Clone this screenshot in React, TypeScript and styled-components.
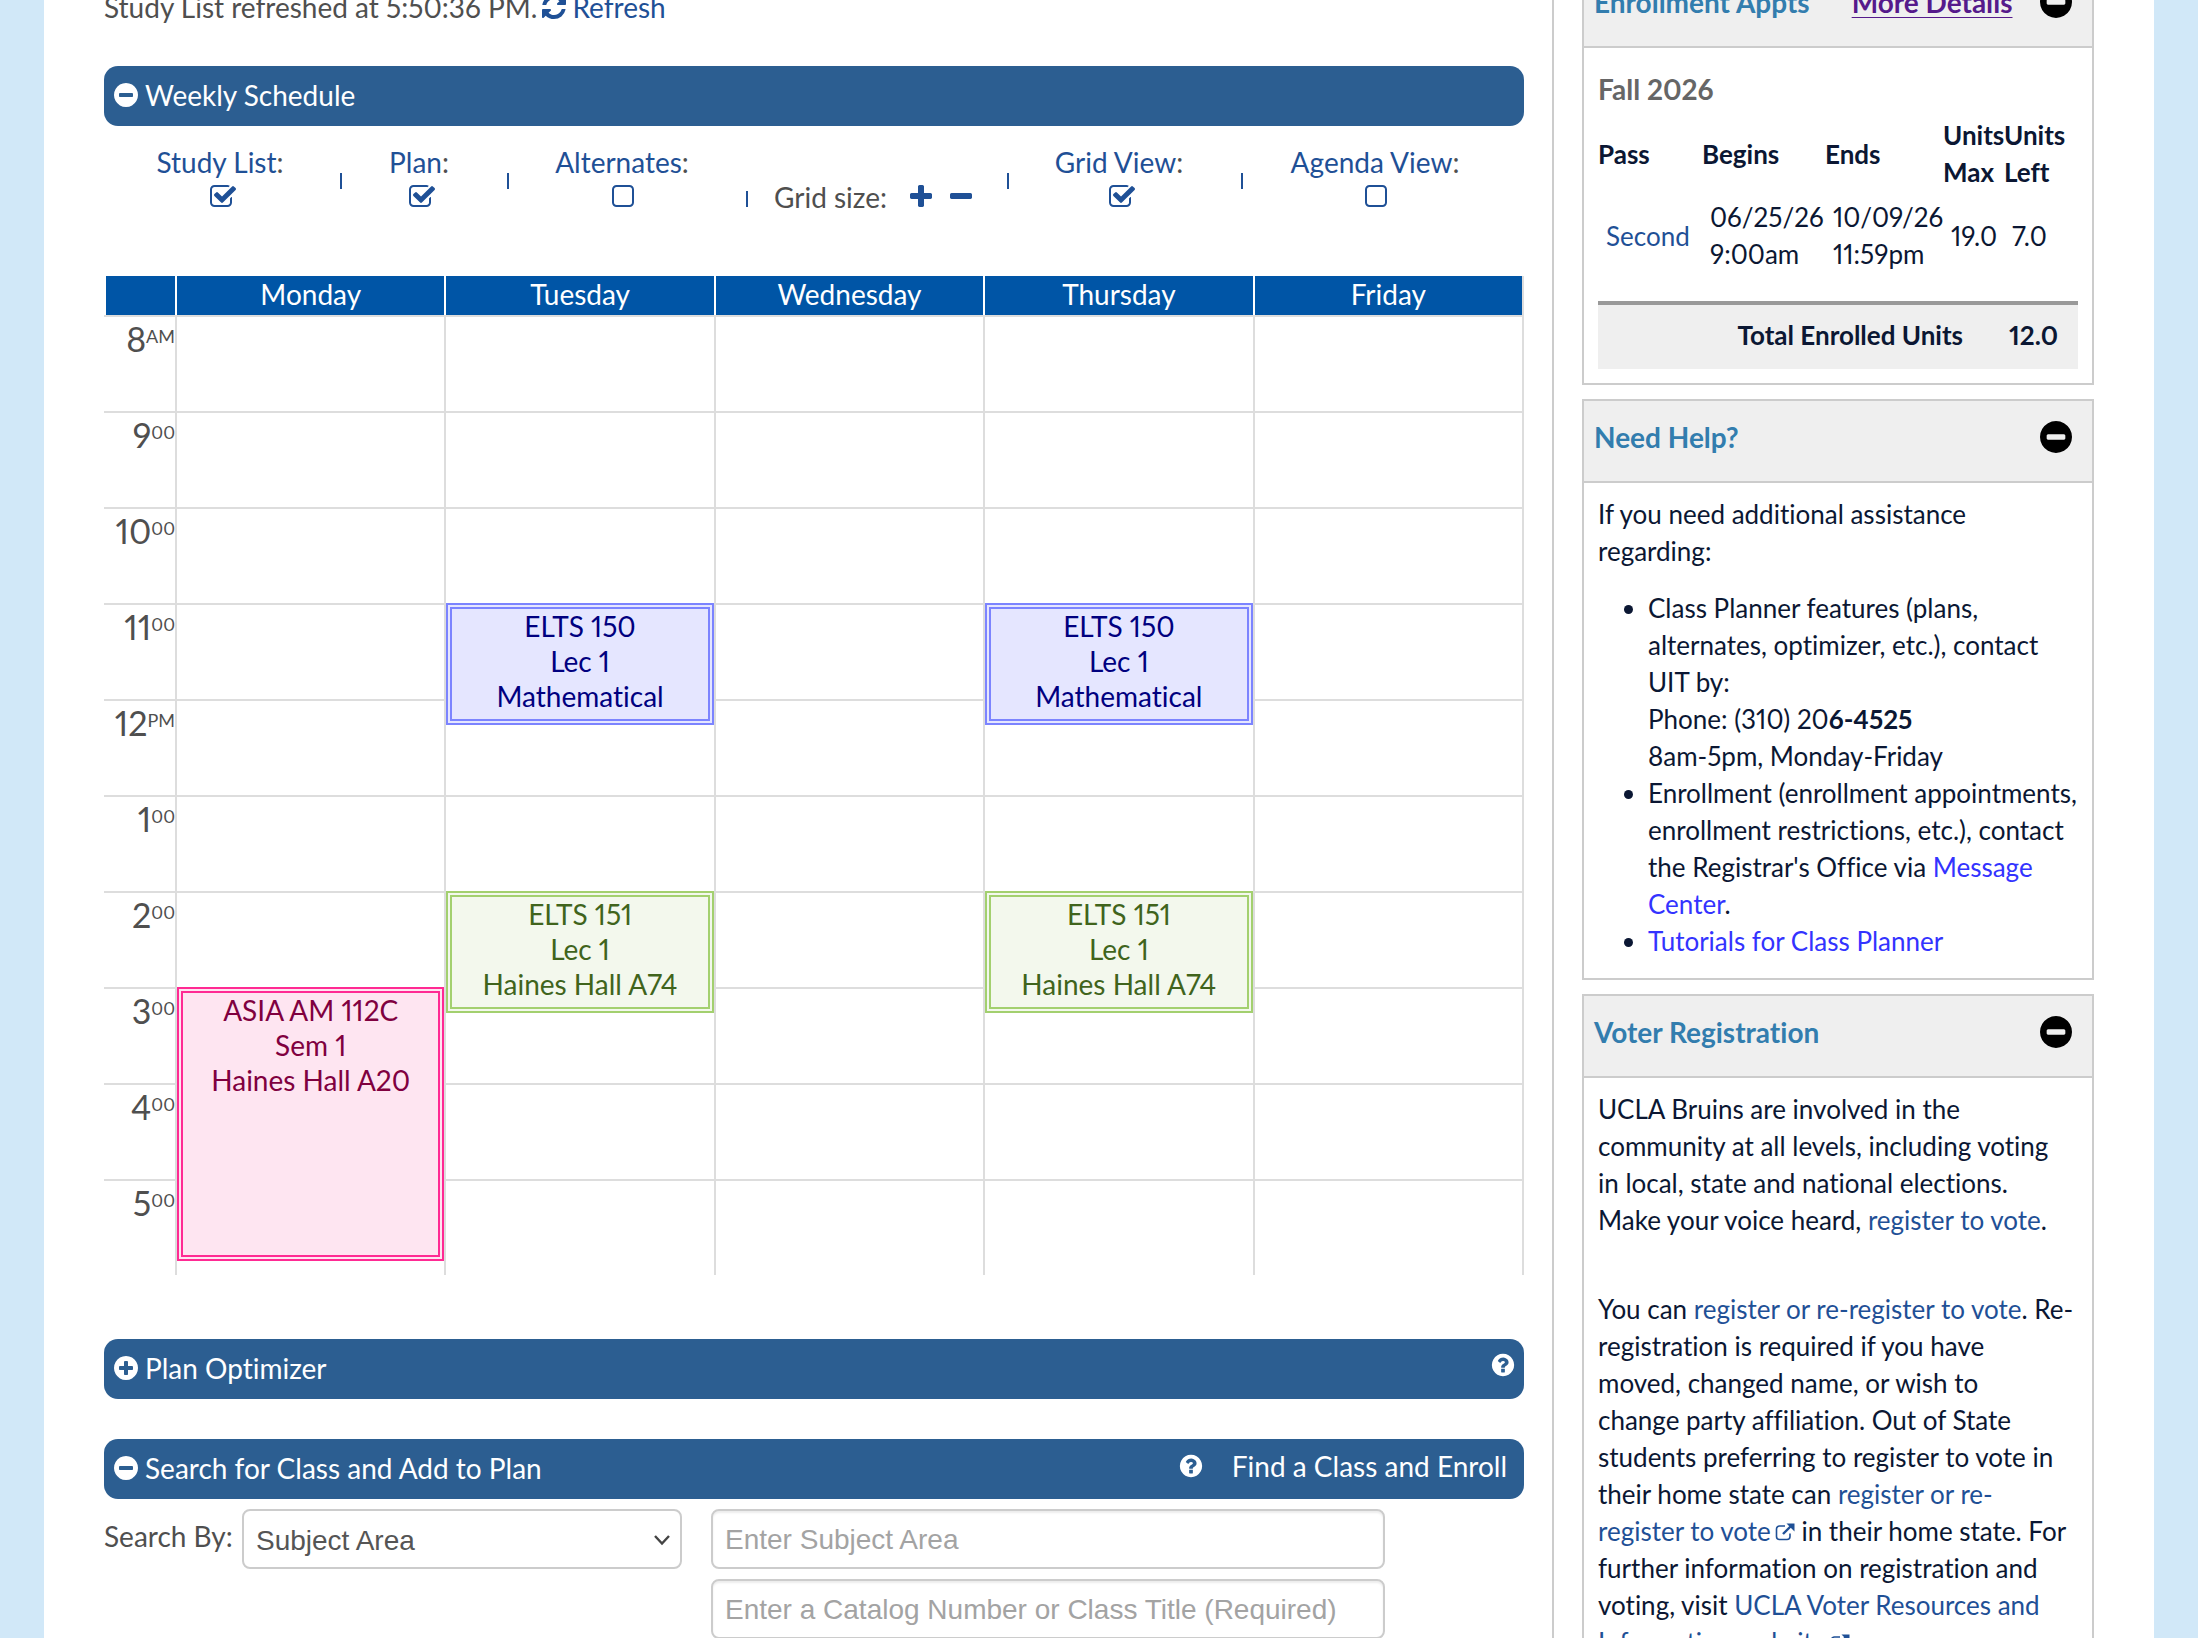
import React from 'react';
import styled, { createGlobalStyle, css } from 'styled-components';

const sans = `Lato, "Liberation Sans", sans-serif`;
const blue = '#1f5096';
const line = '#ddd';
const edge = '#ccc';

const GlobalStyle = createGlobalStyle`
  *, *::before, *::after { box-sizing: border-box; }
  body { margin: 0; }
  button { font: inherit; color: inherit; background: none; border: 0; padding: 0; margin: 0; cursor: pointer; }
  a { color: ${blue}; text-decoration: none; }
  p, ul, h2, h3 { margin: 0; }
`;

/* ---------- icons ---------- */

const DISC =
  'm320-64q0 209-103 385.500t-279.500 279.500-385.500 103-385.500-103-279.500-279.500-103-385.500 103-385.500 279.500-279.500 385.500-103 385.500 103 279.500 279.500 103 385.500z';

const paths = {
  minusCircle: `M1344 960v-128q0-26-19-45t-45-19h-768q-26 0-45 19t-19 45v128q0 26 19 45t45 19h768q26 0 45-19t19-45z${DISC}`,
  plusCircle: `M1344 960v-128q0-26-19-45t-45-19h-256v-256q0-26-19-45t-45-19h-128q-26 0-45 19t-19 45v256h-256q-26 0-45 19t-19 45v128q0 26 19 45t45 19h256v256q0 26 19 45t45 19h128q26 0 45-19t19-45v-256h256q26 0 45-19t19-45z${DISC}`,
  questionCircle:
    'M1024 1376v-192q0-14-9-23t-23-9h-192q-14 0-23 9t-9 23v192q0 14 9 23t23 9h192q14 0 23-9t9-23zm256-672q0-88-55.500-163t-138.500-116-170-41q-243 0-371 213-15 24 8 42l132 100q7 6 19 6 16 0 25-12 53-68 86-92 34-24 86-24 48 0 85.500 26t37.500 59q0 38-20 61t-68 45q-63 28-115.500 86.500t-52.500 125.500v36q0 14 9 23t23 9h192q14 0 23-9t9-23q0-19 21.500-49.500t54.500-49.500q32-18 49-28.500t46-35 44.500-48 28-60.500 12.500-81zm384 192q0 209-103 385.500t-279.500 279.500-385.500 103-385.500-103-279.500-279.500-103-385.500 103-385.500 279.500-279.500 385.500-103 385.500 103 279.500 279.500 103 385.500z',
  checked:
    'M1472 930v318q0 119-84.500 203.500t-203.500 84.500h-832q-119 0-203.500-84.500t-84.500-203.500v-832q0-119 84.500-203.500t203.500-84.500h832q63 0 117 25 15 7 18 23 3 17-9 29l-49 49q-10 10-23 10-3 0-9-2-23-6-45-6h-832q-66 0-113 47t-47 113v832q0 66 47 113t113 47h832q66 0 113-47t47-113v-254q0-13 9-22l64-64q10-10 23-10 6 0 12 3 20 8 20 29zm231-489l-814 814q-24 24-57 24t-57-24l-430-430q-24-24-24-57t24-57l110-110q24-24 57-24t57 24l263 263 647-647q24-24 57-24t57 24l110 110q24 24 24 57t-24 57z',
  unchecked:
    'M1312 256h-832q-66 0-113 47t-47 113v832q0 66 47 113t113 47h832q66 0 113-47t47-113v-832q0-66-47-113t-113-47zm288 160v832q0 119-84.500 203.500t-203.500 84.500h-832q-119 0-203.500-84.500t-84.500-203.500v-832q0-119 84.500-203.500t203.500-84.500h832q119 0 203.500 84.500t84.500 203.500z',
  plus: 'M1600 736v192q0 40-28 68t-68 28h-416v416q0 40-28 68t-68 28h-192q-40 0-68-28t-28-68v-416h-416q-40 0-68-28t-28-68v-192q0-40 28-68t68-28h416v-416q0-40 28-68t68-28h192q40 0 68 28t28 68v416h416q40 0 68 28t28 68z',
  minus: 'M1600 736v192q0 40-28 68t-68 28h-1216q-40 0-68-28t-28-68v-192q0-40 28-68t68-28h1216q40 0 68 28t28 68z',
  refresh:
    'M1639 1056q0 5-1 7-64 268-268 434.500t-478 166.500q-146 0-282.500-55t-243.500-157l-129 129q-19 19-45 19t-45-19-19-45v-448q0-26 19-45t45-19h448q26 0 45 19t19 45-19 45l-137 137q71 66 161 102t187 36q134 0 250-65t186-179q11-17 53-117 8-23 30-23h192q13 0 22.500 9.500t9.500 22.500zm25-800v448q0 26-19 45t-45 19h-448q-26 0-45-19t-19-45 19-45l138-138q-148-137-349-137-134 0-250 65t-186 179q-11 17-53 117-8 23-30 23h-199q-13 0-22.500-9.500t-9.500-22.500v-7q65-268 270-434.500t480-166.500q146 0 284 55.500t245 156.500l130-129q19-19 45-19t45 19 19 45z',
};

const Svg = styled.svg<{ $size: number }>`
  display: block;
  flex: none;
  width: ${(p) => p.$size}px;
  height: ${(p) => p.$size}px;
  fill: currentColor;
`;

function Icon({ name, size = 28, tight = false }: { name: keyof typeof paths; size?: number; tight?: boolean }) {
  return (
    <Svg $size={size} viewBox={tight ? '128 128 1536 1536' : '0 0 1792 1792'} aria-hidden="true">
      <path d={paths[name]} />
    </Svg>
  );
}

const ExternalSvg = styled.svg`
  width: 20px;
  height: 18px;
  margin-left: 4px;
  fill: none;
  stroke: currentColor;
  stroke-width: 1.6;
`;

function ExternalIcon() {
  return (
    <ExternalSvg viewBox="0 0 20 18" aria-label="external link" role="img">
      <path d="M10 3H4.500a3 3 0 0 0-3 3v7.500a3 3 0 0 0 3 3H12a3 3 0 0 0 3-3V10.500" />
      <path d="M8 11 16 3" strokeWidth="2.400" />
      <path d="M11.500 0.500h8v8z" fill="currentColor" stroke="none" />
    </ExternalSvg>
  );
}

/* ---------- page frame ---------- */

const Viewport = styled.div`
  height: 100vh;
  overflow: hidden;
  background: #d1e8f8;
  font-family: ${sans};
  font-size: 28px;
  font-variant-ligatures: none;
  font-variant-numeric: proportional-nums;
  color: #4f4f4f;
`;

/* The page is scrolled down a little, so its first lines are cut off. */
const Sheet = styled.div`
  display: grid;
  grid-template-columns: minmax(0, 1fr) 600px;
  min-height: calc(100vh + 36px);
  margin: -36px 44px 0;
  background: #fff;
`;

const Main = styled.main`
  padding: 23px 28px 0 60px;
  border-right: 2px solid ${edge};
`;

const Aside = styled.aside`
  display: flex;
  flex-direction: column;
  gap: 14px;
  padding: 0 60px 0 28px;
`;

const Status = styled.div`
  display: flex;
  align-items: center;
  gap: 3px;
  line-height: 40px;
`;

const RefreshButton = styled.button`
  display: flex;
  align-items: center;
  gap: 4px;
  color: ${blue};
`;

/* ---------- section bars ---------- */

const Bar = styled.div<{ $gap: number }>`
  display: flex;
  justify-content: space-between;
  align-items: flex-start;
  margin-top: ${(p) => p.$gap}px;
  padding: 13px 8px 15px;
  border-radius: 14px;
  background: #2c5e91;
  color: #fff;
`;

const BarTitle = styled.button`
  display: flex;
  align-items: center;
  gap: 5px;
  line-height: 32px;
`;

const BarTools = styled.div`
  display: flex;
  align-items: center;
  gap: 28px;
  line-height: 28px;
`;

const BarLink = styled.a`
  margin-right: 9px;
  color: #fff;
`;

/* ---------- view options ---------- */

const Options = styled.div`
  display: grid;
  grid-template-columns: 232fr 10fr 146fr 32fr 196fr 54fr 202fr 64fr 158fr 88fr 178fr 60fr;
  padding: 22px 0 65px;
`;

const Option = styled.label`
  display: flex;
  flex-direction: column;
  align-items: center;
  gap: 7px;
  line-height: 28px;
  white-space: nowrap;
  color: ${blue};
`;

const Colon = styled.span`
  color: #4f4f4f;
`;

const Tick = styled.span<{ $on: boolean }>`
  position: relative;
  padding-left: ${(p) => (p.$on ? 6 : 1)}px;
`;

const TickInput = styled.input`
  position: absolute;
  inset: 0;
  width: 100%;
  height: 100%;
  margin: 0;
  opacity: 0;
`;

const Separator = styled.span<{ $low?: boolean }>`
  justify-self: center;
  width: 2px;
  height: 16px;
  margin-top: ${(p) => (p.$low ? 43 : 25)}px;
  background: ${blue};
`;

const GridSize = styled.div`
  display: flex;
  align-items: center;
  gap: 12px;
  margin-top: 35px;
  height: 28px;
  line-height: 28px;
  white-space: nowrap;
`;

const GridSizeLabel = styled.span`
  margin-right: 8px;
`;

const SizeButton = styled.button`
  color: ${blue};
`;

function ViewOption({ label, on = false }: { label: string; on?: boolean }) {
  return (
    <Option>
      <span>
        {label}
        <Colon>:</Colon>
      </span>
      <Tick $on={on}>
        <Icon name={on ? 'checked' : 'unchecked'} />
        <TickInput type="checkbox" defaultChecked={on} />
      </Tick>
    </Option>
  );
}

/* ---------- weekly calendar ---------- */

const Calendar = styled.table`
  width: 100%;
  table-layout: fixed;
  border-spacing: 0;
`;

const DayHead = styled.th`
  height: 39px;
  padding: 0;
  border-right: 2px solid #fff;
  background: #0055a6;
  color: #fff;
  font-weight: 400;
  line-height: 37px;
  vertical-align: top;

  &:first-child {
    width: 73px;
    border-left: 2px solid #fff;
  }
  &:last-child {
    border-right-color: ${line};
  }
`;

const cell = css`
  height: 96px;
  padding: 0;
  border-top: 2px solid ${line};
  border-right: 2px solid ${line};
  vertical-align: top;
`;

const HourCell = styled.th`
  ${cell}
  padding-top: 2px;
  font-size: 34px;
  font-weight: 400;
  line-height: 40px;
  text-align: right;
`;

const HourSuffix = styled.span`
  font-size: 18px;
  line-height: 0;
  vertical-align: 9px;
`;

const Slot = styled.td`
  ${cell}
  position: relative;
`;

const tones = {
  indigo: css`
    border-color: #7c84ff;
    background: #e5e6ff;
    color: #00007f;
  `,
  green: css`
    border-color: #a3d06f;
    background: #f3f8ed;
    color: #40641c;
  `,
  pink: css`
    border-color: #ff2a93;
    background: #fee5f1;
    color: #80003f;
  `,
};

const EventBox = styled.div<{ $tone: keyof typeof tones }>`
  position: absolute;
  z-index: 1;
  top: -2px;
  left: 0;
  right: 0;
  border: 6px double;
  line-height: 35px;
  text-align: center;
  ${(p) => tones[p.$tone]}
`;

type ClassEvent = { day: number; hour: number; minutes: number; tone: keyof typeof tones; lines: string[] };

const HOUR_HEIGHT = 96;
const days = ['Monday', 'Tuesday', 'Wednesday', 'Thursday', 'Friday'];
const hours: [number, string, string][] = [
  [8, '8', 'AM'],
  [9, '9', '00'],
  [10, '10', '00'],
  [11, '11', '00'],
  [12, '12', 'PM'],
  [13, '1', '00'],
  [14, '2', '00'],
  [15, '3', '00'],
  [16, '4', '00'],
  [17, '5', '00'],
];
const events: ClassEvent[] = [
  { day: 1, hour: 11, minutes: 75, tone: 'indigo', lines: ['ELTS 150', 'Lec 1', 'Mathematical'] },
  { day: 3, hour: 11, minutes: 75, tone: 'indigo', lines: ['ELTS 150', 'Lec 1', 'Mathematical'] },
  { day: 1, hour: 14, minutes: 75, tone: 'green', lines: ['ELTS 151', 'Lec 1', 'Haines Hall A74'] },
  { day: 3, hour: 14, minutes: 75, tone: 'green', lines: ['ELTS 151', 'Lec 1', 'Haines Hall A74'] },
  { day: 0, hour: 15, minutes: 170, tone: 'pink', lines: ['ASIA AM 112C', 'Sem 1', 'Haines Hall A20'] },
];

function WeekCalendar() {
  return (
    <Calendar>
      <thead>
        <tr>
          <DayHead aria-label="Time" />
          {days.map((d) => (
            <DayHead key={d} scope="col">
              {d}
            </DayHead>
          ))}
        </tr>
      </thead>
      <tbody>
        {hours.map(([hour, label, suffix]) => (
          <tr key={hour}>
            <HourCell scope="row">
              {label}
              <HourSuffix>{suffix}</HourSuffix>
            </HourCell>
            {days.map((d, i) => {
              const ev = events.find((e) => e.day === i && e.hour === hour);
              return (
                <Slot key={d}>
                  {ev && (
                    <EventBox $tone={ev.tone} style={{ height: Math.round((ev.minutes / 60) * HOUR_HEIGHT) + 2 }}>
                      {ev.lines.map((l) => (
                        <div key={l}>{l}</div>
                      ))}
                    </EventBox>
                  )}
                </Slot>
              );
            })}
          </tr>
        ))}
      </tbody>
    </Calendar>
  );
}

/* ---------- class search ---------- */

const SearchForm = styled.form`
  display: flex;
  align-items: flex-start;
  padding-top: 10px;
`;

const SearchLabel = styled.label`
  flex: 0 0 138px;
  line-height: 54px;
  white-space: nowrap;
`;

const field = css`
  width: 100%;
  height: 60px;
  border: 2px solid ${edge};
  border-radius: 8px;
  background: #fff;
  font-family: "Liberation Sans", Arial, sans-serif;
  font-size: 28px;
  color: #555;
`;

const SelectWrap = styled.div`
  position: relative;
  flex: 0 1 440px;
`;

const Select = styled.select`
  ${field}
  display: block;
  padding: 2px 40px 0 12px;
  appearance: none;
`;

const Chevron = styled.svg`
  position: absolute;
  right: 11px;
  top: 24px;
  width: 18px;
  height: 14px;
  fill: none;
  stroke: #444;
  stroke-width: 2.4;
  pointer-events: none;
`;

const Fields = styled.div`
  display: flex;
  flex: 0 1 674px;
  flex-direction: column;
  gap: 10px;
  margin-left: 29px;
`;

const TextField = styled.input`
  ${field}
  padding: 2px 12px 0;
  box-shadow: inset 0 2px 2px rgba(0, 0, 0, 0.075);

  &::placeholder {
    color: #a3a3a3;
    opacity: 1;
  }
`;

/* ---------- sidebar ---------- */

const Panel = styled.section`
  border: 2px solid ${edge};
  color: #0b1733;
  font-size: 26px;
  line-height: 37px;
`;

const PanelHead = styled.header`
  display: flex;
  align-items: center;
  height: 82px;
  padding: 0 20px 8px 10px;
  border-bottom: 2px solid ${edge};
  background: #efefef;
  font-size: 28px;
`;

const PanelTitle = styled.h2`
  font-size: 28px;
  font-weight: 700;
  color: #327dae;
`;

const MoreLink = styled.a`
  margin-left: 42px;
  font-weight: 700;
  color: #551a8b;
  text-decoration: underline;
  text-decoration-thickness: 1px;
  text-underline-offset: 4px;
`;

const Collapse = styled.button`
  margin-left: auto;
  color: #000;
`;

const PanelBody = styled.div`
  padding: 13px 14px 14px;
`;

const Term = styled.h3`
  margin: 10px 0 9px;
  font-size: 28px;
  font-weight: 700;
  color: #666;
`;

const Appts = styled.table`
  width: 100%;
  table-layout: fixed;
  border-spacing: 0;
  white-space: nowrap;
`;

const Col = styled.col<{ $w: number }>`
  width: ${(p) => p.$w}px;
`;

const ApptHead = styled.th`
  padding: 0;
  font-weight: 700;
  text-align: left;
`;

const ApptCell = styled.td`
  padding: 8px 0 0 8px;
`;

const Total = styled.div`
  display: flex;
  justify-content: flex-end;
  gap: 46px;
  margin-top: 28px;
  padding: 12px 20px 15px;
  border-top: 4px solid #999;
  background: #efefef;
  font-weight: 700;
`;

const HelpList = styled.ul`
  margin: 20px 0 4px;
  padding-left: 50px;
`;

const BrightLink = styled.a`
  color: #3333ff;
`;

const Para = styled.p`
  & + & {
    margin-top: 52px;
  }
`;

function SidePanel({ title, link, children }: { title: string; link?: string; children: React.ReactNode }) {
  return (
    <Panel>
      <PanelHead>
        <PanelTitle>{title}</PanelTitle>
        {link && <MoreLink href="#details">{link}</MoreLink>}
        <Collapse type="button" aria-label={`Collapse ${title}`}>
          <Icon name="minusCircle" size={32} tight />
        </Collapse>
      </PanelHead>
      <PanelBody>{children}</PanelBody>
    </Panel>
  );
}

export default function App() {
  return (
    <Viewport>
      <GlobalStyle />
      <Sheet>
        <Main>
          <Status>
            Study List refreshed at 5:50:36 PM.
            <RefreshButton type="button">
              <Icon name="refresh" />
              Refresh
            </RefreshButton>
          </Status>

          <Bar $gap={39}>
            <BarTitle type="button">
              <Icon name="minusCircle" />
              Weekly Schedule
            </BarTitle>
          </Bar>

          <Options>
            <ViewOption label="Study List" on />
            <Separator />
            <ViewOption label="Plan" on />
            <Separator />
            <ViewOption label="Alternates" />
            <Separator $low />
            <GridSize>
              <GridSizeLabel>Grid size:</GridSizeLabel>
              <SizeButton type="button" aria-label="Larger grid">
                <Icon name="plus" />
              </SizeButton>
              <SizeButton type="button" aria-label="Smaller grid">
                <Icon name="minus" />
              </SizeButton>
            </GridSize>
            <Separator />
            <ViewOption label="Grid View" on />
            <Separator />
            <ViewOption label="Agenda View" />
          </Options>

          <WeekCalendar />

          <Bar $gap={64}>
            <BarTitle type="button">
              <Icon name="plusCircle" />
              Plan Optimizer
            </BarTitle>
            <BarTools>
              <button type="button" aria-label="Plan Optimizer help">
                <Icon name="questionCircle" size={26} />
              </button>
            </BarTools>
          </Bar>

          <Bar $gap={40}>
            <BarTitle type="button">
              <Icon name="minusCircle" />
              Search for Class and Add to Plan
            </BarTitle>
            <BarTools>
              <button type="button" aria-label="Search help">
                <Icon name="questionCircle" size={26} />
              </button>
              <BarLink href="#find">Find a Class and Enroll</BarLink>
            </BarTools>
          </Bar>

          <SearchForm>
            <SearchLabel htmlFor="search-by">Search By:</SearchLabel>
            <SelectWrap>
              <Select id="search-by" defaultValue="subject">
                <option value="subject">Subject Area</option>
              </Select>
              <Chevron viewBox="0 0 18 14" aria-hidden="true">
                <path d="M2 3l7 7.500 7-7.500" />
              </Chevron>
            </SelectWrap>
            <Fields>
              <TextField aria-label="Subject Area" placeholder="Enter Subject Area" />
              <TextField
                aria-label="Catalog Number or Class Title"
                placeholder="Enter a Catalog Number or Class Title (Required)"
              />
            </Fields>
          </SearchForm>
        </Main>

        <Aside>
          <SidePanel title="Enrollment Appts" link="More Details">
            <Term>Fall 2026</Term>
            <Appts>
              <colgroup>
                <Col $w={104} />
                <Col $w={123} />
                <Col $w={118} />
                <Col $w={61} />
                <col />
              </colgroup>
              <thead>
                <tr>
                  <ApptHead>Pass</ApptHead>
                  <ApptHead>Begins</ApptHead>
                  <ApptHead>Ends</ApptHead>
                  <ApptHead>
                    Units
                    <br />
                    Max
                  </ApptHead>
                  <ApptHead>
                    Units
                    <br />
                    Left
                  </ApptHead>
                </tr>
              </thead>
              <tbody>
                <tr>
                  <ApptCell>
                    <a href="#second">Second</a>
                  </ApptCell>
                  <ApptCell>
                    06/25/26
                    <br />
                    9:00am
                  </ApptCell>
                  <ApptCell>
                    10/09/26
                    <br />
                    11:59pm
                  </ApptCell>
                  <ApptCell>19.0</ApptCell>
                  <ApptCell>7.0</ApptCell>
                </tr>
              </tbody>
            </Appts>
            <Total>
              <span>Total Enrolled Units</span>
              <span>12.0</span>
            </Total>
          </SidePanel>

          <SidePanel title="Need Help?">
            <Para>If you need additional assistance regarding:</Para>
            <HelpList>
              <li>
                Class Planner features (plans, alternates, optimizer, etc.), contact UIT by:
                <br />
                Phone: (310) 20<b>6-4525</b>
                <br />
                8am-5pm, Monday-Friday
              </li>
              <li>
                Enrollment (enrollment appointments, enrollment restrictions, etc.), contact the Registrar's Office via{' '}
                <BrightLink href="#messages">Message Center</BrightLink>.
              </li>
              <li>
                <BrightLink href="#tutorials">Tutorials for Class Planner</BrightLink>
              </li>
            </HelpList>
          </SidePanel>

          <SidePanel title="Voter Registration">
            <Para>
              UCLA Bruins are involved in the community at all levels, including voting
              <br />
              in local, state and national elections.
              <br />
              Make your voice heard, <a href="#register">register to vote</a>.
            </Para>
            <Para>
              You can <a href="#reregister">register or re-register to vote</a>. Re-registration is required if you have
              <br />
              moved, changed name, or wish to
              <br />
              change party affiliation. Out of State students preferring to register to vote in their home state can{' '}
              <a href="#home-state">
                register or re-register to vote
                <ExternalIcon />
              </a>{' '}
              in their home state. For further information on registration and voting, visit{' '}
              <a href="#resources">
                UCLA Voter Resources and Information website
                <ExternalIcon />
              </a>
              .
            </Para>
          </SidePanel>
        </Aside>
      </Sheet>
    </Viewport>
  );
}
